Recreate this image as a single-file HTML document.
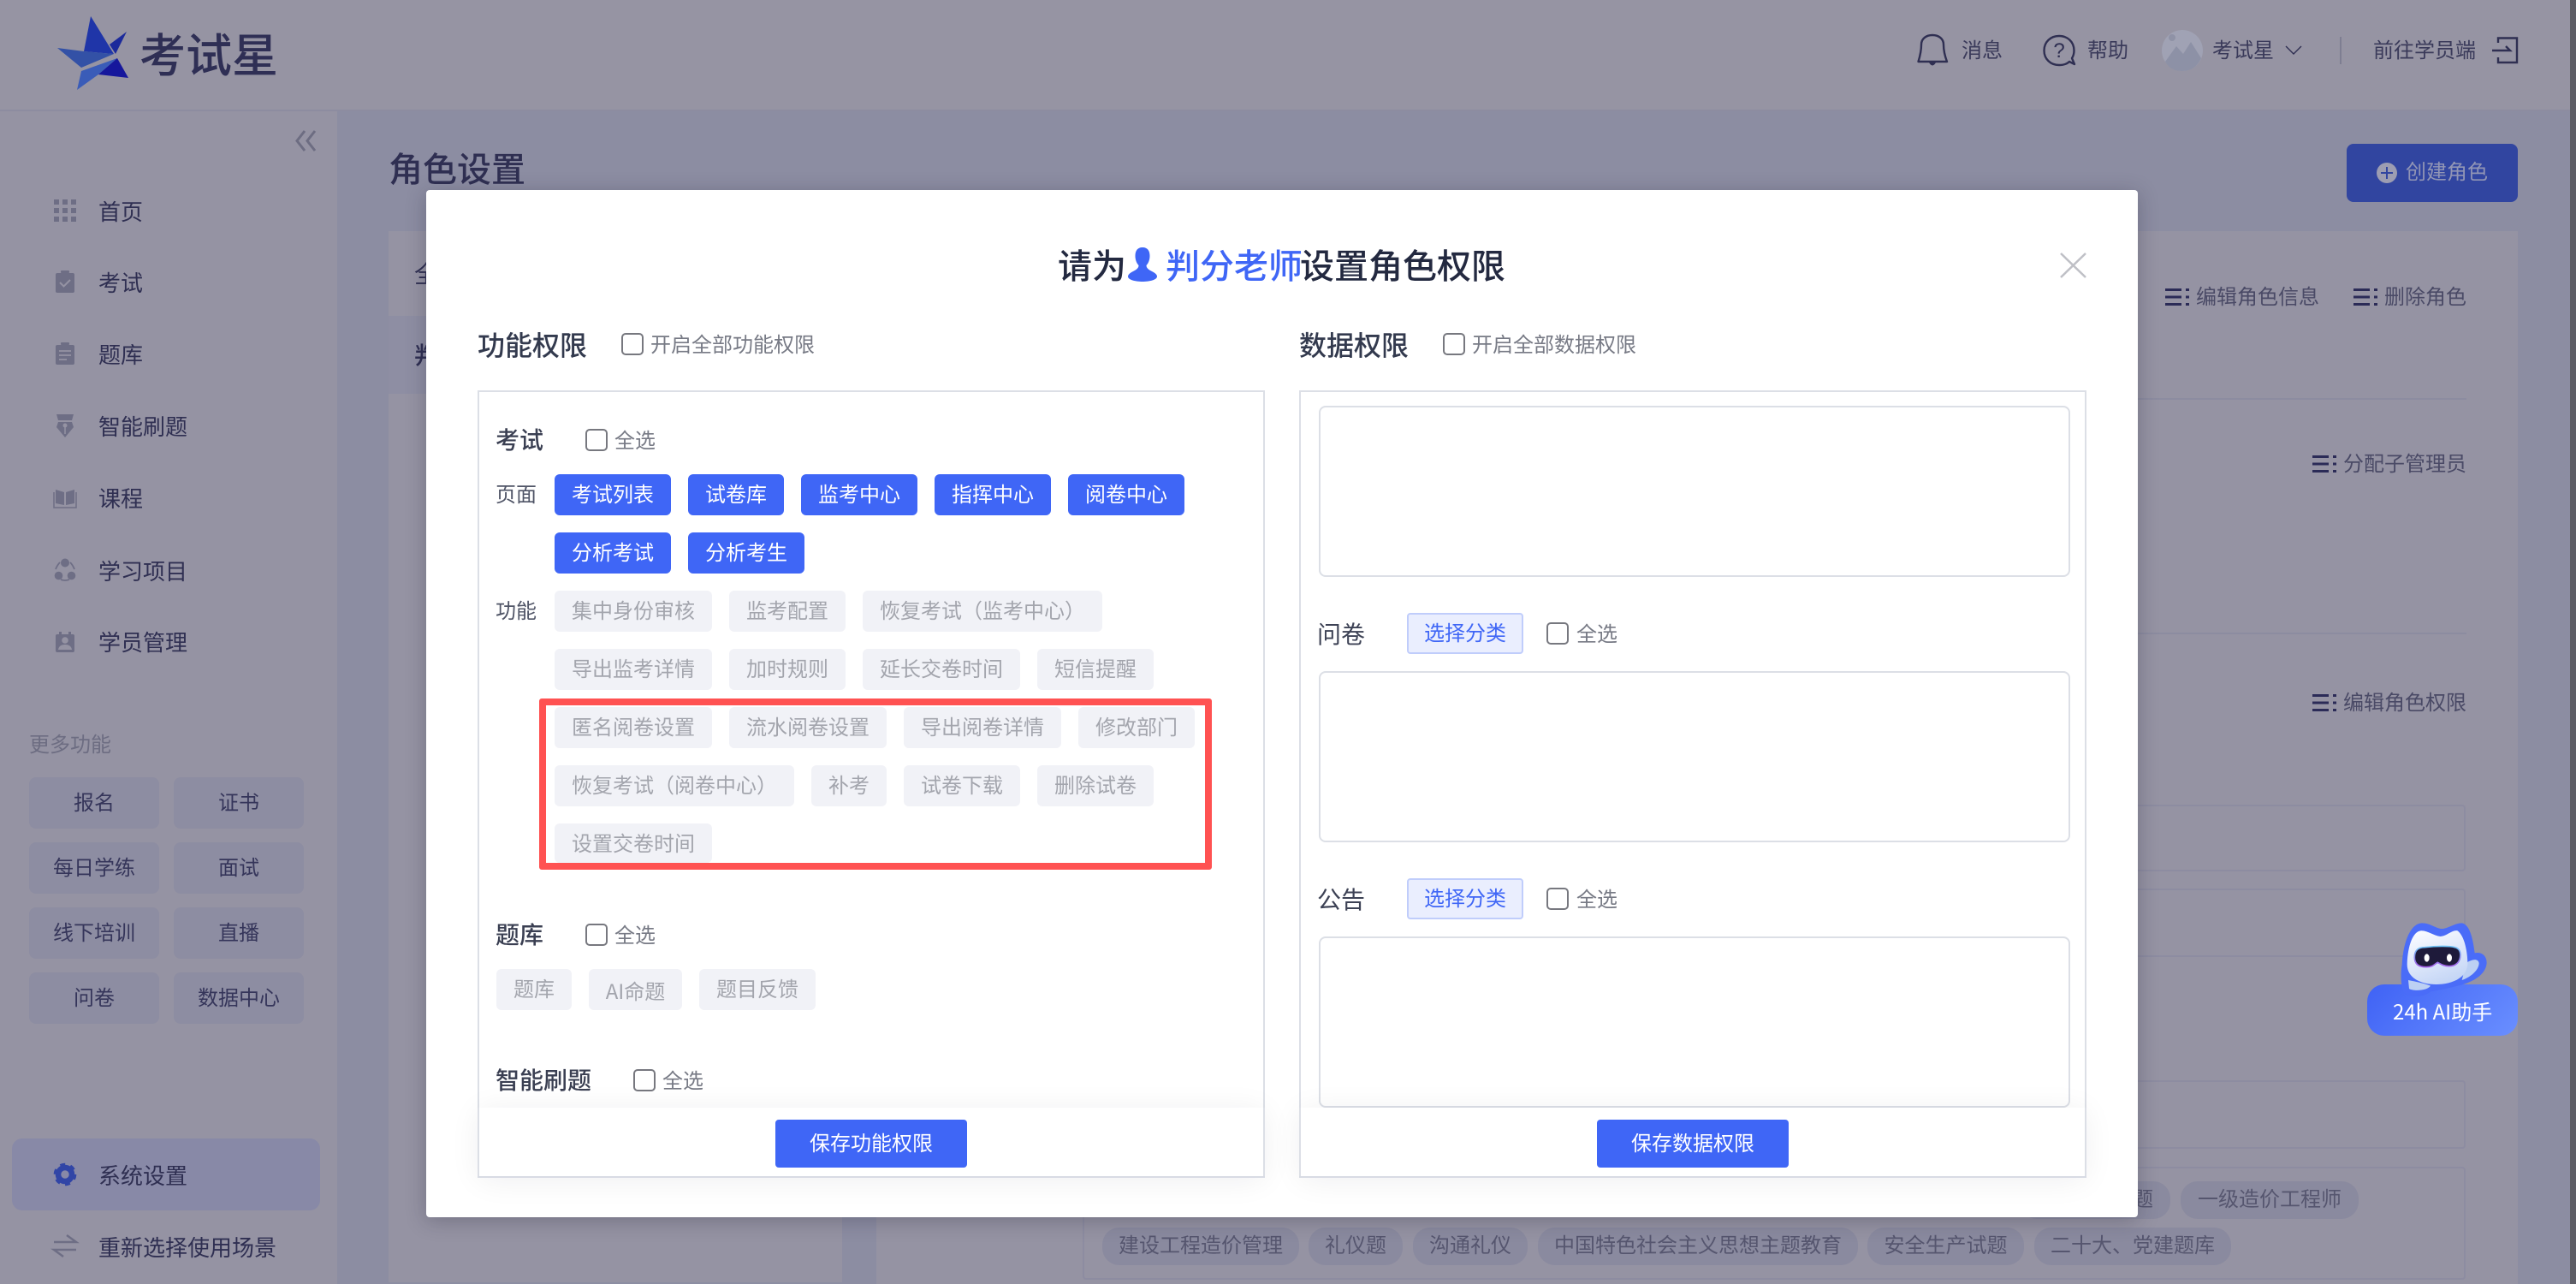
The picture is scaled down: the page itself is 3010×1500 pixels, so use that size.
<!DOCTYPE html>
<html lang="zh-CN">
<head>
<meta charset="utf-8">
<title>角色设置</title>
<style>
html,body{margin:0;padding:0}
body{width:3010px;height:1500px;position:relative;overflow:hidden;background:#8c8da2;font-family:"Liberation Sans","Noto Sans CJK SC",sans-serif;color:#2f2f52}
.b{position:absolute}
.x{position:absolute;line-height:0;white-space:nowrap;transform:translate(-1px,1px)}
.m .x{transform:translate(-1px,2px)}
.m .x.lb{transform:translate(0,2px)}
.m .x.h2,.m .x.h3,.m .x.sm{transform:translate(-2px,2px)}
.m .x.h2{transform:translate(-2px,1px)}
.m .x.h1{transform:translate(-1px,1px)}
.x.nav{transform:translate(-2px,1px)}
.nav{font-size:26px;left:117px;color:#2f2f52}
.hd{font-size:24px;color:#3a3a5a}
.more{position:absolute;width:152px;height:60px;line-height:62px;text-align:center;background:#8d8da2;border-radius:8px;font-size:24px;color:#35355a}
.act{font-size:24px;color:#4a4a66}
.line{position:absolute;background:#8c8ca0}
.frame{position:absolute;box-sizing:border-box;border:2px solid #8d8ca1;border-radius:4px}
.pill{position:absolute;height:44px;line-height:44px;text-align:center;border-radius:20px;background:#8a8a9f;color:#56566f;font-size:24px;white-space:nowrap;overflow:hidden}
#modal{position:absolute;left:498px;top:222px;width:2000px;height:1200px;background:#fff;border-radius:4px;box-shadow:0 4px 24px rgba(30,30,50,.28)}
.m{position:absolute;left:-498px;top:-222px;width:3010px;height:1500px}
.t{position:absolute;height:48px;line-height:50px;text-align:center;font-size:24px;border-radius:6px;white-space:nowrap}
.on{background:#3f66f6;color:#fff}
.off{background:#f1f2f7;color:#a3a5ad}
.cb{position:absolute;width:26px;height:26px;box-sizing:border-box;border:2.5px solid #77787f;border-radius:5px;background:#fff}
.lb{font-size:24px;color:#777a85}
.h1{font-size:32px;font-weight:500;color:#333a4e}
.h2{font-size:28px;font-weight:500;color:#3a3f52}
.h3{font-size:28px;color:#3d4255}
.sm{font-size:24px;color:#4f5466}
.box{position:absolute;box-sizing:border-box;border:2px solid #dcdfe6;background:#fff}
.in{position:absolute;box-sizing:border-box;border:2px solid #dcdfe6;border-radius:8px;background:#fff}
.foot{position:absolute;background:#fff;box-shadow:0 4px 36px rgba(20,20,40,.07)}
.save{position:absolute;width:224px;height:56px;line-height:58px;text-align:center;background:#3f66f6;color:#fff;border-radius:4px;font-size:24px}
.sel{position:absolute;width:136px;height:48px;line-height:46px;text-align:center;box-sizing:border-box;background:#eaeefe;border:2px solid #c0cdfb;border-radius:4px;color:#3f66f6;font-size:24px}
</style>
</head>
<body>

<!-- background layout -->
<div class="b" style="left:0;top:0;width:3010px;height:128px;background:#9694a3"></div>
<div class="b" style="left:0;top:128px;width:3010px;height:2px;background:#8d8ca0"></div>
<div class="b" style="left:0;top:130px;width:394px;height:1370px;background:#9593a3"></div>
<div class="b" style="left:454px;top:270px;width:530px;height:1228px;background:#9593a3"></div>
<div class="b" style="left:454px;top:369px;width:530px;height:91px;background:#8e8ea3"></div>
<div class="b" style="left:1024px;top:270px;width:1918px;height:1230px;background:#9593a3"></div>
<div class="b" style="left:3003px;top:0;width:7px;height:1500px;background:#5e5e66"></div>

<!-- logo text -->
<div class="x" style="left:164px;top:65px;font-size:54px;font-weight:500;color:#2f2f55">考试星</div>

<!-- sidebar and header icons -->
<svg class="b" style="left:0;top:0" width="3010" height="1500" viewBox="0 0 3010 1500">
  <!-- logo star -->
  <polygon points="106,19 133,63 98,60" fill="#1f35a8"/>
  <polygon points="148,37 128,52 135,63" fill="#1c2a9b"/>
  <polygon points="67,56 98,60 133,63 95,79" fill="#3351a6"/>
  <polygon points="137,68 95,83 90,105 115,87" fill="#3a5cb8"/>
  <polygon points="137,68 115,87 150,91" fill="#16179c"/>
  <!-- collapse -->
  <path d="M356 153 L347 164.500 L356 176 M368 153 L359 164.500 L368 176" fill="none" stroke="#6d6d82" stroke-width="3"/>
  <g fill="#6e6e85">
    <!-- home -->
    <rect x="63" y="233" width="6" height="6"/><rect x="73" y="233" width="6" height="6"/><rect x="83" y="233" width="6" height="6"/>
    <rect x="63" y="243" width="6" height="6"/><rect x="73" y="243" width="6" height="6"/><rect x="83" y="243" width="6" height="6"/>
    <rect x="63" y="253" width="6" height="6"/><rect x="73" y="253" width="6" height="6"/><rect x="83" y="253" width="6" height="6"/>
    <!-- exam -->
    <rect x="65" y="319" width="22" height="23" rx="2"/><rect x="71" y="316" width="10" height="3" rx="1"/>
    <!-- question bank -->
    <rect x="65" y="403" width="22" height="23" rx="2"/><rect x="71" y="400" width="10" height="3" rx="1"/>
    <!-- practice nib -->
    <polygon points="66,484 86,484 84,491 68,491"/>
    <path d="M68 493 H84 L86 499 L76 511 L66 499Z"/>
    <!-- book -->
    <path d="M65 572 L75 575 V590 L65 588Z M87 572 L77 575 V590 L87 588Z"/>
    <!-- project -->
    <circle cx="76" cy="657.500" r="5"/><circle cx="68.500" cy="672.500" r="4.800"/><circle cx="83.500" cy="672.500" r="4.800"/>
    <!-- student -->
    <rect x="65" y="741" width="22" height="21" rx="2"/><rect x="69" y="738" width="3" height="5"/><rect x="80" y="738" width="3" height="5"/>
  </g>
  <path d="M70 330 L74.500 334.500 L82 327" fill="none" stroke="#9593a3" stroke-width="2"/>
  <path d="M69 410 H83 M69 415 H83 M69 420 H78" fill="none" stroke="#9593a3" stroke-width="1.800"/>
  <circle cx="76" cy="497" r="2.500" fill="#9593a3"/><path d="M76 499 V507" stroke="#9593a3" stroke-width="1.500"/>
  <path d="M63 575 V593 H89 V575" fill="none" stroke="#6e6e85" stroke-width="1.500"/>
  <path d="M65 665 Q67 660 70 657 M87 665 Q85 660 82 657 M71 677 Q76 679 81 677" fill="none" stroke="#6e6e85" stroke-width="1.800"/>
  <circle cx="76" cy="748" r="3.800" fill="#9593a3"/><path d="M68 759 Q69 753 76 753 Q83 753 84 759Z" fill="#9593a3"/>
  <!-- swap -->
  <path d="M63 1451 H89 L78 1443 M89 1460 H63 L74 1468" fill="none" stroke="#6e6e85" stroke-width="2.500"/>
  <!-- bell -->
  <path d="M2241.500 72 C2244 64 2245 56 2245 52 C2245 45 2251 41 2258 41 C2265 41 2271 45 2271 52 C2271 56 2272 64 2275 72 Z" fill="none" stroke="#2f2f52" stroke-width="2.400" stroke-linejoin="round"/>
  <path d="M2254 73 Q2258 80 2262 73Z" fill="#2f2f52"/>
  <!-- help -->
  <path d="M2406 42 C2396 42 2388.500 49 2388.500 59 C2388.500 69 2396 76 2406 76 C2411 76 2415 75 2418 72 L2424 75 L2421 68 C2423 65 2423.500 62 2423.500 59 C2423.500 49 2416 42 2406 42Z" fill="none" stroke="#2f2f52" stroke-width="2.400" stroke-linejoin="round"/>
  <text x="2406" y="67" font-size="24" text-anchor="middle" fill="#2f2f52" font-family="Liberation Sans, sans-serif">?</text>
  <!-- avatar -->
  <circle cx="2550" cy="59" r="24" fill="#a0a2b4"/>
  <path d="M2530 72 L2543 54 L2551 63 L2560 49 L2572 68 Q2565 83 2550 83 Q2536 83 2530 72Z" fill="#8d91a6"/>
  <circle cx="2538" cy="44" r="4" fill="#8f92a6"/>
  <path d="M2671 54 L2680 63 L2689 54" fill="none" stroke="#2f2f52" stroke-width="1.400"/>
  <rect x="2734" y="43" width="2" height="32" fill="#7e7e92"/>
  <!-- exit -->
  <path d="M2919 50 V44.500 H2941 V73 H2919 V67 M2912 59 H2933 L2928 54" fill="none" stroke="#2f2f52" stroke-width="2.400"/>
  <!-- menu icons -->
  <g stroke="#2b2b57" stroke-width="3" fill="none">
    <path d="M2530 338.500 H2549 M2530 347 H2549 M2530 355.500 H2549 M2554 338.500 H2558 M2554 347 H2558 M2554 355.500 H2558"/>
    <path d="M2750 338.500 H2769 M2750 347 H2769 M2750 355.500 H2769 M2774 338.500 H2778 M2774 347 H2778 M2774 355.500 H2778"/>
    <path d="M2702 533.500 H2721 M2702 542 H2721 M2702 550.500 H2721 M2726 533.500 H2730 M2726 542 H2730 M2726 550.500 H2730"/>
    <path d="M2702 812.500 H2721 M2702 821 H2721 M2702 829.500 H2721 M2726 812.500 H2730 M2726 821 H2730 M2726 829.500 H2730"/>
  </g>
</svg>

<!-- sidebar -->
<div class="x nav" style="top:247px">首页</div>
<div class="x nav" style="top:330px">考试</div>
<div class="x nav" style="top:414px">题库</div>
<div class="x nav" style="top:498px">智能刷题</div>
<div class="x nav" style="top:582px">课程</div>
<div class="x nav" style="top:667px">学习项目</div>
<div class="x nav" style="top:750px">学员管理</div>
<div class="x" style="left:35px;top:870px;font-size:24px;color:#6d6d82">更多功能</div>
<div class="more" style="left:34px;top:908px">报名</div>
<div class="more" style="left:203px;top:908px">证书</div>
<div class="more" style="left:34px;top:984px">每日学练</div>
<div class="more" style="left:203px;top:984px">面试</div>
<div class="more" style="left:34px;top:1060px">线下培训</div>
<div class="more" style="left:203px;top:1060px">直播</div>
<div class="more" style="left:34px;top:1136px">问卷</div>
<div class="more" style="left:203px;top:1136px">数据中心</div>
<div class="b" style="left:14px;top:1330px;width:360px;height:84px;background:#8889a7;border-radius:12px;z-index:0"></div>
<svg class="b" style="left:60px;top:1356px" width="32" height="32" viewBox="60 1356 32 32">
  <circle cx="76" cy="1372" r="8" fill="none" stroke="#3145a6" stroke-width="6.500"/>
  <circle cx="76" cy="1372" r="11.800" fill="none" stroke="#3145a6" stroke-width="3" stroke-dasharray="6 6.360"/>
</svg>
<div class="x nav" style="top:1373px">系统设置</div>
<div class="x nav" style="top:1457px">重新选择使用场景</div>

<!-- header right -->
<div class="x hd" style="left:2293px;top:59px">消息</div>
<div class="x hd" style="left:2440px;top:59px">帮助</div>
<div class="x hd" style="left:2586px;top:59px">考试星</div>
<div class="x hd" style="left:2774px;top:59px">前往学员端</div>

<!-- page head -->
<div class="x" style="left:455px;top:198px;font-size:40px;font-weight:500;color:#2f2f52">角色设置</div>
<div class="b" style="left:2742px;top:168px;width:200px;height:68px;background:#3145a0;border-radius:8px"></div>
<svg class="b" style="left:2777px;top:190px" width="24" height="24" viewBox="2777 190 24 24">
  <circle cx="2789" cy="202" r="12" fill="#9c9db2"/>
  <path d="M2782 202 H2796 M2789 195 V209" stroke="#3145a0" stroke-width="2"/>
</svg>
<div class="x" style="left:2812px;top:201px;font-size:24px;color:#9195b5">创建角色</div>

<!-- left list -->
<div class="x" style="left:485px;top:320px;font-size:28px;color:#2f2f52">全部</div>
<div class="x" style="left:485px;top:415px;font-size:28px;font-weight:500;color:#2f2f52">判分老师</div>

<!-- right panel -->
<div class="x act" style="left:2567px;top:347px">编辑角色信息</div>
<div class="x act" style="left:2787px;top:347px">删除角色</div>
<div class="x act" style="left:2739px;top:542px">分配子管理员</div>
<div class="x act" style="left:2739px;top:821px">编辑角色权限</div>
<div class="line" style="left:1064px;top:465px;width:1818px;height:2px"></div>
<div class="line" style="left:1064px;top:739px;width:1818px;height:2px"></div>
<div class="frame" style="left:1265px;top:940px;width:1616px;height:78px"></div>
<div class="frame" style="left:1265px;top:1038px;width:1616px;height:80px"></div>
<div class="frame" style="left:1265px;top:1262px;width:1616px;height:80px"></div>
<div class="frame" style="left:1265px;top:1363px;width:1616px;height:132px"></div>
<div class="pill" style="left:2360px;top:1380px;width:176px;text-align:right;padding-right:20px;box-sizing:border-box">二级造价试题</div>
<div class="pill" style="left:2548px;top:1380px;width:208px">一级造价工程师</div>
<div class="pill" style="left:1288px;top:1434px;width:230px">建设工程造价管理</div>
<div class="pill" style="left:1529px;top:1434px;width:110px">礼仪题</div>
<div class="pill" style="left:1651px;top:1434px;width:134px">沟通礼仪</div>
<div class="pill" style="left:1797px;top:1434px;width:374px">中国特色社会主义思想主题教育</div>
<div class="pill" style="left:2182px;top:1434px;width:183px">安全生产试题</div>
<div class="pill" style="left:2377px;top:1434px;width:230px">二十大、党建题库</div>

<!-- mascot -->
<div class="b" style="left:2766px;top:1150px;width:176px;height:60px;border-radius:20px;background:linear-gradient(135deg,#3f62f5,#6a8fff)"></div>
<svg class="b" style="left:2740px;top:1050px" width="220" height="190" viewBox="0 0 660 570">
  <defs>
    <linearGradient id="bd" x1="0.300" y1="0" x2="0.700" y2="1"><stop offset="0" stop-color="#f8faff"/><stop offset="1" stop-color="#c2d4f5"/></linearGradient>
    <linearGradient id="vs" x1="0" y1="0" x2="0" y2="1"><stop offset="0" stop-color="#6fc6f8"/><stop offset="1" stop-color="#a35be6"/></linearGradient>
  </defs>
  <path d="M200 230 C205 140 235 85 270 85 C300 85 320 105 340 105 C360 105 385 85 410 85 C440 90 450 150 455 190 C480 185 497 200 497 225 C495 260 460 285 420 298 C380 310 330 320 300 325 C280 345 220 350 205 325 C195 300 195 260 200 230Z" fill="#4a6cf8"/>
  <path d="M425 225 C440 215 465 205 470 225 C470 250 440 275 410 285Z" fill="#bcd0f3"/>
  <path d="M222 285 C250 290 290 300 300 305 C290 322 240 325 225 315Z" fill="#bcd0f3"/>
  <path d="M218 230 C220 160 240 115 265 112 C290 110 310 130 335 132 C360 130 375 108 395 112 C420 130 430 190 430 225 C430 280 370 300 320 300 C270 300 218 280 218 230Z" fill="url(#bd)"/>
  <path d="M244 205 C244 179 258 170 280 170 C320 165 370 165 385 170 C401 174 407 187 404 205 C401 223 388 236 365 236 C345 236 335 228 325 223 C315 228 310 239 285 239 C258 239 244 228 244 205Z" fill="#1e1a3a" stroke="url(#vs)" stroke-width="5"/>
  <ellipse cx="287" cy="207" rx="9" ry="14" fill="#fff"/>
  <ellipse cx="366" cy="207" rx="9" ry="14" fill="#fff"/>
</svg>
<div class="x" style="left:2797px;top:1180px;font-size:24px;color:#fff;font-family:'Noto Sans CJK SC',sans-serif">24h AI助手</div>

<!-- modal -->
<div id="modal">
<div class="m">
  <!-- title -->
  <div class="x" style="left:1237px;top:310px;font-size:40px;font-weight:500;color:#232940">请为</div>
  <svg class="b" style="left:1318px;top:289px" width="34" height="40" viewBox="0 0 34 40">
    <path d="M17 0 C23 0 25.500 4 25.500 10 C25.500 15 23.500 19 21.500 21 C21.500 24 24 26 28 28 C32 30 34 32 34 34 C34 38 25 40 17 40 C9 40 0 38 0 34 C0 32 2 30 6 28 C10 26 12.500 24 12.500 21 C10.500 19 8.500 15 8.500 10 C8.500 4 11 0 17 0Z" fill="#3f66f6"/>
  </svg>
  <div class="x" style="left:1363px;top:310px;font-size:40px;font-weight:500;color:#3f66f6">判分老师</div>
  <div class="x" style="left:1520px;top:310px;font-size:40px;font-weight:500;color:#232940">设置角色权限</div>
  <svg class="b" style="left:2407px;top:295px" width="31" height="30" viewBox="0 0 31 30">
    <path d="M1 1 L30 29 M30 1 L1 29" stroke="#bfc0c6" stroke-width="2.500" fill="none"/>
  </svg>

  <!-- left column -->
  <div class="x h1" style="left:559px;top:403px">功能权限</div>
  <div class="cb" style="left:726px;top:389px"></div>
  <div class="x lb" style="left:760px;top:402px">开启全部功能权限</div>
  <div class="box" style="left:558px;top:456px;width:920px;height:920px"></div>

  <div class="x h2" style="left:581px;top:514px">考试</div>
  <div class="cb" style="left:684px;top:501px"></div>
  <div class="x lb" style="left:718px;top:514px">全选</div>

  <div class="x sm" style="left:581px;top:577px">页面</div>
  <div class="t on" style="left:648px;top:554px;width:136px">考试列表</div>
  <div class="t on" style="left:804px;top:554px;width:112px">试卷库</div>
  <div class="t on" style="left:936px;top:554px;width:136px">监考中心</div>
  <div class="t on" style="left:1092px;top:554px;width:136px">指挥中心</div>
  <div class="t on" style="left:1248px;top:554px;width:136px">阅卷中心</div>
  <div class="t on" style="left:648px;top:622px;width:136px">分析考试</div>
  <div class="t on" style="left:804px;top:622px;width:136px">分析考生</div>

  <div class="x sm" style="left:581px;top:713px">功能</div>
  <div class="t off" style="left:648px;top:690px;width:184px">集中身份审核</div>
  <div class="t off" style="left:852px;top:690px;width:136px">监考配置</div>
  <div class="t off" style="left:1008px;top:690px;width:280px">恢复考试（监考中心）</div>
  <div class="t off" style="left:648px;top:758px;width:184px">导出监考详情</div>
  <div class="t off" style="left:852px;top:758px;width:136px">加时规则</div>
  <div class="t off" style="left:1008px;top:758px;width:184px">延长交卷时间</div>
  <div class="t off" style="left:1212px;top:758px;width:136px">短信提醒</div>
  <div class="t off" style="left:648px;top:826px;width:184px">匿名阅卷设置</div>
  <div class="t off" style="left:852px;top:826px;width:184px">流水阅卷设置</div>
  <div class="t off" style="left:1056px;top:826px;width:184px">导出阅卷详情</div>
  <div class="t off" style="left:1260px;top:826px;width:136px">修改部门</div>
  <div class="t off" style="left:648px;top:894px;width:280px">恢复考试（阅卷中心）</div>
  <div class="t off" style="left:948px;top:894px;width:88px">补考</div>
  <div class="t off" style="left:1056px;top:894px;width:136px">试卷下载</div>
  <div class="t off" style="left:1212px;top:894px;width:136px">删除试卷</div>
  <div class="t off" style="left:648px;top:962px;width:184px;overflow:hidden;height:46px">设置交卷时间</div>
  <div class="b" style="left:630px;top:816px;width:786px;height:200px;box-sizing:border-box;border:8px solid #ff5252;border-radius:3px"></div>

  <div class="x h2" style="left:581px;top:1092px">题库</div>
  <div class="cb" style="left:684px;top:1079px"></div>
  <div class="x lb" style="left:718px;top:1092px">全选</div>
  <div class="t off" style="left:580px;top:1132px;width:88px">题库</div>
  <div class="t off" style="left:688px;top:1132px;width:109px;font-family:'Noto Sans CJK SC',sans-serif">AI命题</div>
  <div class="t off" style="left:817px;top:1132px;width:136px">题目反馈</div>

  <div class="x h2" style="left:581px;top:1262px">智能刷题</div>
  <div class="cb" style="left:740px;top:1249px"></div>
  <div class="x lb" style="left:774px;top:1262px">全选</div>

  <div class="foot" style="left:560px;top:1294px;width:916px;height:80px"></div>
  <div class="b" style="left:558px;top:1294px;width:2px;height:82px;background:#dcdfe6"></div>
  <div class="b" style="left:1476px;top:1294px;width:2px;height:82px;background:#dcdfe6"></div>
  <div class="b" style="left:558px;top:1374px;width:920px;height:2px;background:#d8dbe4"></div>
  <div class="save" style="left:906px;top:1308px">保存功能权限</div>

  <!-- right column -->
  <div class="x h1" style="left:1519px;top:403px">数据权限</div>
  <div class="cb" style="left:1686px;top:389px"></div>
  <div class="x lb" style="left:1720px;top:402px">开启全部数据权限</div>
  <div class="box" style="left:1518px;top:456px;width:920px;height:920px"></div>
  <div class="in" style="left:1541px;top:474px;width:878px;height:200px"></div>

  <div class="x h3" style="left:1541px;top:740px">问卷</div>
  <div class="sel" style="left:1644px;top:716px">选择分类</div>
  <div class="cb" style="left:1807px;top:727px"></div>
  <div class="x lb" style="left:1842px;top:740px">全选</div>
  <div class="in" style="left:1541px;top:784px;width:878px;height:200px"></div>

  <div class="x h3" style="left:1541px;top:1050px">公告</div>
  <div class="sel" style="left:1644px;top:1026px">选择分类</div>
  <div class="cb" style="left:1807px;top:1037px"></div>
  <div class="x lb" style="left:1842px;top:1050px">全选</div>
  <div class="in" style="left:1541px;top:1094px;width:878px;height:200px"></div>

  <div class="foot" style="left:1520px;top:1294px;width:916px;height:80px"></div>
  <div class="b" style="left:1518px;top:1294px;width:2px;height:82px;background:#dcdfe6"></div>
  <div class="b" style="left:2436px;top:1294px;width:2px;height:82px;background:#dcdfe6"></div>
  <div class="b" style="left:1518px;top:1374px;width:920px;height:2px;background:#d8dbe4"></div>
  <div class="save" style="left:1866px;top:1308px">保存数据权限</div>
</div>
</div>

</body>
</html>
